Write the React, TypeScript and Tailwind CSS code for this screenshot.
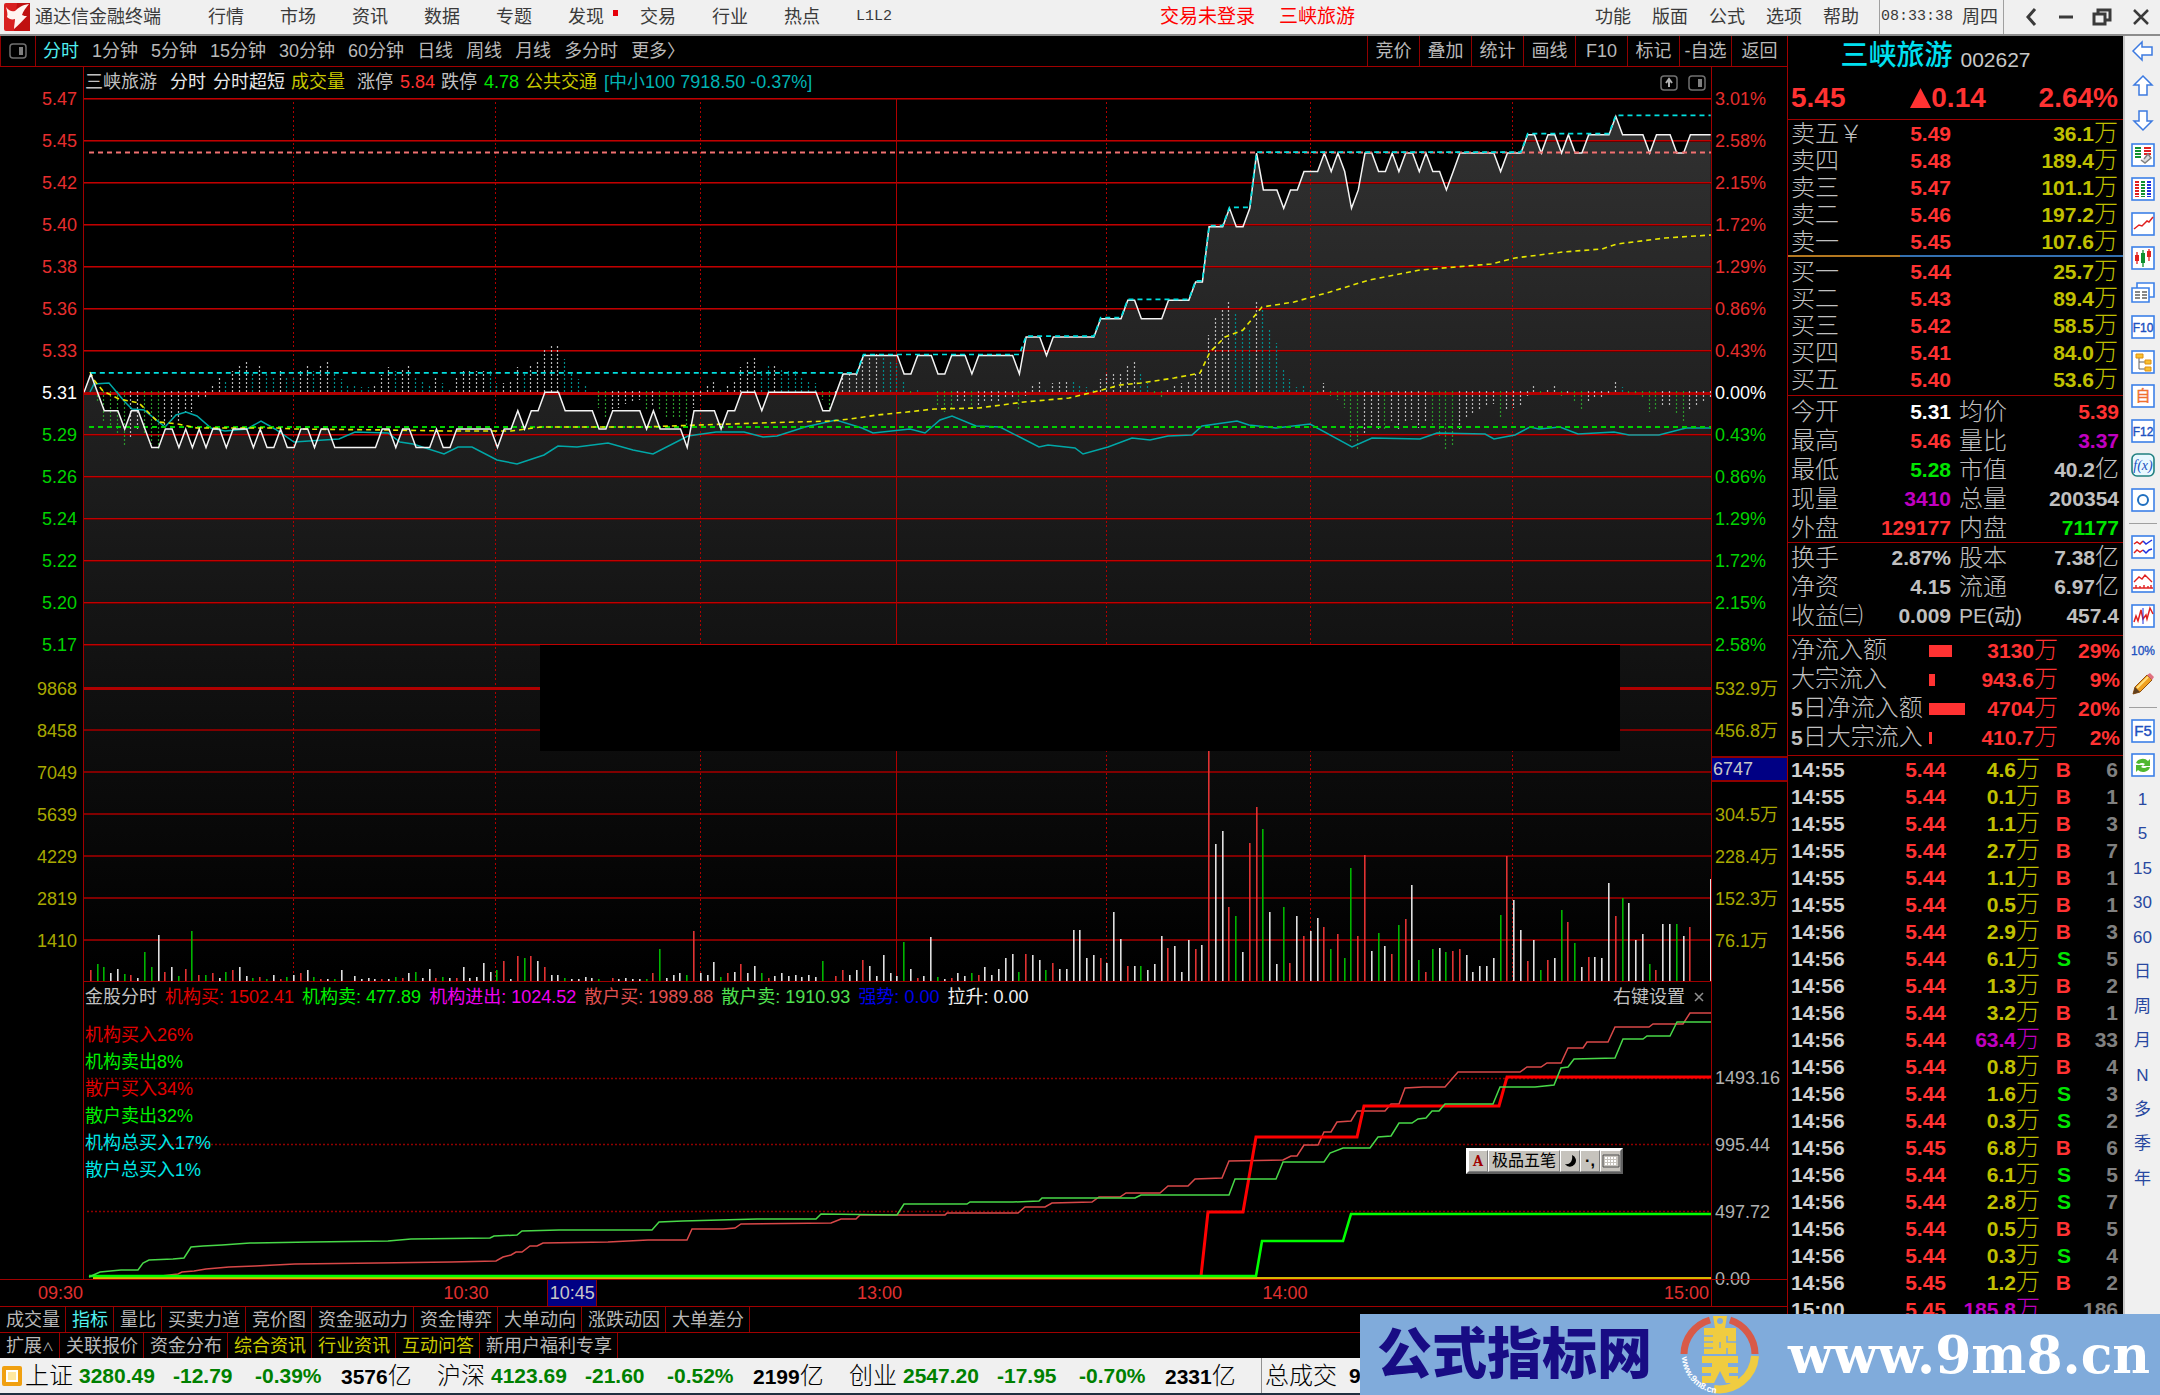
import type { ReactNode } from "react";

const MENU = ["行情", "市场", "资讯", "数据", "专题", "发现", "交易", "行业", "热点", "L1L2"];
const SYSTEM_MENU = ["功能", "版面", "公式", "选项", "帮助"];
const PERIODS = ["分时", "1分钟", "5分钟", "15分钟", "30分钟", "60分钟", "日线", "周线", "月线", "多分时", "更多〉"];
const ACTIONS = ["竞价", "叠加", "统计", "画线", "F10", "标记", "-自选", "返回"];

const PRICE_AXIS = ["5.47", "5.45", "5.42", "5.40", "5.38", "5.36", "5.33", "5.31", "5.29", "5.26", "5.24", "5.22", "5.20", "5.17"];
const PERCENT_AXIS = ["3.01%", "2.58%", "2.15%", "1.72%", "1.29%", "0.86%", "0.43%", "0.00%", "0.43%", "0.86%", "1.29%", "1.72%", "2.15%", "2.58%"];
const VOLUME_AXIS = ["9868", "8458", "7049", "5639", "4229", "2819", "1410"];
const AMOUNT_AXIS = ["532.9万", "456.8万", "6747", "304.5万", "228.4万", "152.3万", "76.1万"];

const TABS = ["成交量", "指标", "量比", "买卖力道", "竞价图", "资金驱动力", "资金博弈", "大单动向", "涨跌动因", "大单差分"];
const LINKS = ["扩展∧", "关联报价", "资金分布", "综合资讯", "行业资讯", "互动问答", "新用户福利专享"];

// [minute, price in cents], only the turning points
const PRICE =
  "0:531 1:532 3:530 5:530 6:529 7:530 8:530 10:528 11:528 12:529 13:529 14:528 15:529 16:528 17:529 18:528 19:529 20:529 21:528 22:529 24:529 25:528 26:529 27:528 28:528 29:529 30:528 31:528 32:529 33:529 34:528 35:529 36:529 37:528 43:528 44:529 45:529 46:528 47:529 48:529 49:528 51:528 52:529 53:528 54:528 55:529 60:529 61:528 62:529 63:529 64:530 65:529 66:530 67:530 68:531 70:531 71:530 75:530 76:529 77:529 78:530 82:530 83:529 84:530 85:529 88:529 89:528 90:530 93:530 94:529 95:530 96:530 97:531 99:531 100:530 101:531 108:531 109:530 110:530 111:531 112:532 114:532 115:533 120:533 121:532 122:532 123:533 125:533 126:532 127:532 128:533 130:533 131:532 132:533 137:533 138:532 139:534 141:534 142:533 143:534 149:534 150:535 153:535 154:536 155:536 156:535 159:535 160:536 163:536 164:537 165:537 166:540 168:540 169:541 170:540 171:540 172:541 173:544 174:542 176:542 177:541 178:542 179:542 180:543 182:543 183:544 184:543 185:544 186:543 187:541 188:542 189:544 190:544 191:543 192:543 193:544 194:543 195:544 196:544 197:543 198:544 199:543 200:543 201:542 202:543 203:544 208:544 209:543 210:544 212:544 213:545 214:545 215:544 216:545 217:545 218:544 219:545 220:544 221:544 222:545 225:545 226:546 227:545 230:545 231:544 232:545 234:545 235:544 236:544 237:545 240:545"
    .split(" ")
    .map((pair) => pair.split(":").map(Number) as [number, number]);

// one entry a minute from minute 2: signed height, then w / t / g
const MOMENTUM =
  "-10g -30g -35g -42g -55g -45w -38w -42g -52g -57g -35w -32w -30w -22w -20w -6w -6w 8w 16w 10t 21w 27w 30w 20t 27w 18t 14t 21w 15t 15t 21w 28w 21t 27w 30w 20t 13t 8t 6t 5t 5t 6w 17w 25w 21t 23w 27w 16t 10t 6t 15w 9t 4t 14w 21w 21w 21w 21w 21t 9t 9w 12w 25w 20t 27w 30w 42w 48w 48w 33t 19t 13t 7t 0w -16g -25g -18w -16w -12w -9w -8w -18g -13w -18g -25g -27g -27g -33g -16w -4w 6w 12w 2t 8w 12w 25w 32w 36w 21t 27t 27w 24t 21t 21t 15t 12t 9t -8g -18g -4w 18w 18w 20w 36w 36w 40w 34t 32t 29t 10t -3g 3t 0w 0w -13g -20g -16g -10w -10w -18g -14w -10w -9w -9w -7w -6w -18g -4w 8w 12w 3t 9w 12w 12w 10t 8t 5t 4t 13w 18w 18w 18w 28w 31w 18t 9t -2g -5g 4w 8w 9w 10w 18w 22w 57w 76w 82w 91w 79t 62t 62t 91w 83t 64t 49t 22t 13t 5t 7t 4t -2g 9w -4g -8g -16g -51g -59g -41w -34w -37w -39g -31w -38w -31w -28w -36w -31w -36g -44g -58g -53g -37w -27w -21w -17w -14w -12w -25g -19w -16w -14w -4w 7w -3g 4w 7w -4g -3w -11g -19g -10w -7w -5w -3w 12w 5t -1g -3g -6g -20g -18g -14w -14w -22g -29g -19w -14w -9w -6w".split(" ");

// one entry a minute from minute 1: height, then r / g / w
const VOLUME =
  "11r 17g 14g 8w 12w 7g 6r 3w 29g 14g 46w 9r 14w 5g 12r 50g 6r 6g 8r 3w 9g 11r 14w 5w 3g 4r 2g 6w 2r 4g 6w 8r 11w 4g 2r 2w 2g 11w 0w 5w 2w 3w 2w 2r 2w 4g 3r 8w 9g 3w 12w 3r 4g 3w 3r 14w 3w 4w 18w 9w 11g 20r 2w 25r 23g 25r 20w 14r 6w 6w 3g 2w 2w 4w 3w 2g 0w 3r 2w 3w 2w 2w 2g 8r 32g 3w 6w 8w 6g 50r 8w 6w 19w 4g 8r 9w 17r 8w 15w 8g 3r 5w 8w 5w 6w 4w 6w 4w 20g 0w 5r 11r 6w 11w 21r 15w 5w 26w 8w 5w 39g 12w 3r 5w 44w 4g 2w 3r 8w 5w 8g 6r 14w 6w 12w 23w 27w 9g 27r 26w 21w 11g 18r 12w 12w 51w 51w 23w 26w 23r 18w 69w 42w 15r 15w 15g 11w 17w 45w 33r 35w 9w 41w 32r 36w 265r 137w 150w 74r 65g 29w 138r 174r 152g 69w 17w 74g 18r 65w 45r 50w 63w 54r 32g 47r 23g 113g 45r 126r 30w 48g 35w 27r 56g 62r 96w 21g 9r 32g 33w 29g 30r 32r 26w 9w 15w 15w 23w 66g 125r 81w 51w 20r 41w 11g 21r 23w 71g 59r 38g 14w 24r 24w 23w 98w 65r 83g 78w 41w 47w 17g 11r 57w 57w 57g 45w 54r 0w 0w 102w".split(" ");

const AVERAGE =
  "90,372 94,380 103,391 119,399 139,403 149,413 158,422 178,424 197,428 277,428 294,429 388,430 444,431 511,431 541,427 644,427 699,425 760,423 832,421 850,419 877,415 907,412 934,409 979,408 1024,402 1069,398 1102,390 1120,385 1141,383 1174,378 1200,373 1210,352 1225,337 1243,330 1262,307 1294,302 1330,292 1369,280 1420,270 1491,264 1515,258 1563,252 1602,249 1617,244 1665,238 1711,235";
const INDEX_LINE =
  "90,392 94,384 109,383 125,402 132,409 144,410 165,427 176,415 186,412 197,416 211,428 225,431 247,429 261,421 275,429 294,442 339,439 355,432 388,433 400,442 413,444 444,454 458,447 472,447 497,460 517,464 544,455 558,446 577,447 608,443 633,450 653,454 688,436 716,432 744,432 763,437 777,436 805,427 836,420 862,428 873,433 910,429 925,433 940,420 952,416 976,426 1000,427 1039,447 1048,445 1075,448 1083,454 1108,447 1132,438 1150,440 1168,436 1192,435 1202,426 1237,421 1249,425 1276,428 1310,424 1352,447 1372,438 1420,439 1437,433 1485,434 1494,439 1515,435 1530,427 1539,429 1560,427 1578,434 1614,432 1629,435 1659,435 1686,428 1711,428";

const RETAIL_SELL =
  "89,1277 100,1272 121,1270 138,1270 143,1263 149,1260 173,1259 184,1258 191,1247 203,1246 222,1245 250,1243 311,1242 388,1241 411,1239 490,1238 494,1236 517,1235 522,1231 559,1230 652,1230 659,1222 683,1221 757,1219 816,1219 821,1214 897,1215 904,1204 967,1204 970,1202 1013,1202 1039,1201 1042,1198 1135,1198 1141,1195 1229,1195 1235,1179 1276,1179 1283,1162 1324,1162 1330,1153 1343,1148 1370,1148 1378,1137 1391,1136 1399,1123 1412,1123 1418,1119 1426,1118 1432,1111 1439,1111 1445,1104 1493,1104 1500,1087 1535,1087 1554,1085 1561,1068 1568,1067 1574,1059 1615,1058 1623,1039 1643,1039 1647,1036 1670,1036 1677,1022 1711,1022";
const RETAIL_BUY =
  "161,1276 178,1274 182,1272 194,1271 206,1269 229,1267 255,1266 295,1264 377,1263 451,1262 496,1261 503,1257 511,1255 516,1252 522,1252 530,1246 537,1246 543,1243 608,1242 648,1240 687,1240 692,1229 723,1229 735,1228 741,1224 831,1223 841,1219 856,1219 860,1215 945,1215 947,1213 1018,1213 1025,1207 1045,1207 1052,1203 1092,1202 1099,1197 1120,1197 1126,1193 1160,1193 1168,1186 1188,1186 1195,1179 1222,1178 1229,1161 1283,1160 1291,1156 1297,1156 1304,1145 1318,1145 1324,1132 1331,1132 1337,1122 1351,1121 1357,1111 1385,1111 1391,1104 1399,1104 1405,1088 1423,1087 1445,1087 1458,1072 1520,1072 1527,1067 1541,1067 1547,1063 1561,1063 1568,1048 1583,1048 1587,1042 1608,1042 1615,1027 1649,1027 1653,1024 1683,1024 1690,1013 1711,1013";
const FUND_BUY = "1201,1276 1208,1212 1243,1212 1256,1137 1357,1137 1364,1106 1499,1106 1507,1077 1711,1077";
const FUND_SELL = "89,1276 1256,1276 1262,1241 1343,1241 1351,1214 1711,1214";

const ASKS = [
  ["卖五￥", "5.49", "36.1"],
  ["卖四", "5.48", "189.4"],
  ["卖三", "5.47", "101.1"],
  ["卖二", "5.46", "197.2"],
  ["卖一", "5.45", "107.6"],
];
const BIDS = [
  ["买一", "5.44", "25.7"],
  ["买二", "5.43", "89.4"],
  ["买三", "5.42", "58.5"],
  ["买四", "5.41", "84.0"],
  ["买五", "5.40", "53.6"],
];

const RED = "text-[#ff3232]";
const GREEN = "text-[#00e600]";
const PURPLE = "text-[#c000c0]";
const GRAY = "text-[#c0c0c0]";

const QUOTES = [
  ["今开", "5.31", "text-white", "均价", "5.39", RED],
  ["最高", "5.46", RED, "量比", "3.37", PURPLE],
  ["最低", "5.28", GREEN, "市值", "40.2亿", GRAY],
  ["现量", "3410", PURPLE, "总量", "200354", GRAY],
  ["外盘", "129177", RED, "内盘", "71177", GREEN],
];
const FUNDAMENTALS = [
  ["换手", "2.87%", GRAY, "股本", "7.38亿", GRAY],
  ["净资", "4.15", GRAY, "流通", "6.97亿", GRAY],
  ["收益㈢", "0.009", GRAY, "PE(动)", "457.4", GRAY],
];
const FLOWS: [string, number, string, string][] = [
  ["净流入额", 23, "3130万", "29%"],
  ["大宗流入", 6, "943.6万", "9%"],
  ["5日净流入额", 36, "4704万", "20%"],
  ["5日大宗流入", 3, "410.7万", "2%"],
];
const TRADES = [
  ["14:55", "5.44", "4.6万", "B", "6"],
  ["14:55", "5.44", "0.1万", "B", "1"],
  ["14:55", "5.44", "1.1万", "B", "3"],
  ["14:55", "5.44", "2.7万", "B", "7"],
  ["14:55", "5.44", "1.1万", "B", "1"],
  ["14:55", "5.44", "0.5万", "B", "1"],
  ["14:56", "5.44", "2.9万", "B", "3"],
  ["14:56", "5.44", "6.1万", "S", "5"],
  ["14:56", "5.44", "1.3万", "B", "2"],
  ["14:56", "5.44", "3.2万", "B", "1"],
  ["14:56", "5.44", "63.4万", "B", "33"],
  ["14:56", "5.44", "0.8万", "B", "4"],
  ["14:56", "5.44", "1.6万", "S", "3"],
  ["14:56", "5.44", "0.3万", "S", "2"],
  ["14:56", "5.45", "6.8万", "B", "6"],
  ["14:56", "5.44", "6.1万", "S", "5"],
  ["14:56", "5.44", "2.8万", "S", "7"],
  ["14:56", "5.44", "0.5万", "B", "5"],
  ["14:56", "5.44", "0.3万", "S", "4"],
  ["14:56", "5.45", "1.2万", "B", "2"],
  ["15:00", "5.45", "185.8万", "", "186"],
];

const INDEXES = [
  ["上证", "3280.49", "-12.79", "-0.39%", "3576"],
  ["沪深", "4123.69", "-21.60", "-0.52%", "2199"],
  ["创业", "2547.20", "-17.95", "-0.70%", "2331"],
];

const minuteX = (minute: number) => 84 + minute * 6.778;
const priceY = (cents: number) => 392.3 - (cents - 531) * 18.4;
const toPoints = (list: [number, number][]) =>
  list.map(([m, p]) => `${minuteX(m).toFixed(1)},${priceY(p).toFixed(1)}`).join(" ");

const BAR_COLORS: Record<string, string> = { r: "#e03232", g: "#00b400", w: "#e0e0e0" };
const MOMENTUM_COLORS: Record<string, string> = { w: "#b8b8b8", t: "#008a8a", g: "#2c962c" };

function PriceChart() {
  let top = 0;
  const highs = PRICE.slice(1).map(([m, p]) => {
    top = Math.max(top, p);
    return [m, top] as [number, number];
  });
  const line = toPoints(PRICE);

  return (
    <svg viewBox="84 98 1627 884" preserveAspectRatio="none" className="block w-full h-[884px]" role="img" aria-label="分时走势">
      <defs>
        <linearGradient id="area" gradientUnits="userSpaceOnUse" x1="0" y1="116" x2="0" y2="970">
          <stop offset="0" stopColor="#313131" />
          <stop offset="1" stopColor="#000000" />
        </linearGradient>
      </defs>
      <polygon points={`${line} 1711,982 84,982`} fill="url(#area)" />
      <g shapeRendering="crispEdges">
        {PRICE_AXIS.map((_, i) =>
          i === 7 ? null : (
            <g key={i}>
              <rect x="84" y={98 + i * 42} width="1627" height="1" fill="#c00000" />
              <rect x="84" y={99 + i * 42} width="1627" height="1" fill="#6a0000" />
            </g>
          ),
        )}
        <rect x="84" y="392" width="1627" height="3" fill="#b40000" />
        <rect x="84" y="687" width="1627" height="3" fill="#b00000" />
        {[730, 772, 814, 856, 898, 940].map((y) => (
          <rect key={y} x="84" y={y - 1} width="1627" height="2" fill="#800000" />
        ))}
        <rect x="84" y="981" width="1627" height="1" fill="#a00000" />
        {[293, 495, 700, 1106, 1310, 1512].map((x) => (
          <line key={x} x1={x + 0.5} x2={x + 0.5} y1="102" y2="981" stroke="#b00000" strokeWidth="1" strokeDasharray="2 2.5" />
        ))}
        <rect x="896" y="98" width="1" height="884" fill="#b00000" />
      </g>
      {MOMENTUM.map((entry, i) => {
        const h = parseInt(entry, 10);
        if (!h) return null;
        const x = Math.round(minuteX(i + 2)) - 1;
        return (
          <line
            key={i}
            x1={x + 0.5}
            x2={x + 0.5}
            y1={h > 0 ? 392 : 391}
            y2={392 - h}
            stroke={MOMENTUM_COLORS[entry.slice(-1)]}
            strokeWidth="1.2"
            strokeDasharray="2 2"
          />
        );
      })}
      {VOLUME.map((entry, i) => {
        const h = parseInt(entry, 10);
        return (
          <rect
            key={i}
            x={Math.round(minuteX(i + 1)) - 1}
            y={981 - h}
            width="1.6"
            height={h}
            fill={BAR_COLORS[entry.slice(-1)]}
          />
        );
      })}
      <g fill="none">
        <polyline points={INDEX_LINE} stroke="#00a8a8" strokeWidth="1.5" />
        <path d="M89 427H1711" stroke="#00d000" strokeWidth="2" strokeDasharray="5 4" />
        <polyline points={AVERAGE} stroke="#e6e600" strokeWidth="1.6" strokeDasharray="5 4" />
        <polyline points={line} stroke="#f4f4f4" strokeWidth="1.5" />
        <path d="M89 152.500H1711" stroke="#f07070" strokeWidth="2" strokeDasharray="5 4" />
        <polyline points={toPoints(highs)} stroke="#00e0e0" strokeWidth="1.7" strokeDasharray="5 4" transform="translate(0 -1)" />
      </g>
      <rect x="540" y="645" width="1080" height="106" fill="#000" />
    </svg>
  );
}

function FundChart() {
  return (
    <svg viewBox="84 1010 1627 269" preserveAspectRatio="none" className="block w-full h-[269px]" role="img" aria-label="金股分时">
      {[1078, 1144, 1211].map((y) => (
        <path key={y} d={`M87 ${y}.5H1711`} stroke="#900000" strokeWidth="1.5" strokeDasharray="2 2" />
      ))}
      <path d="M93 1278H1711" stroke="#d8b800" strokeWidth="2" />
      <g fill="none">
        <polyline points={RETAIL_BUY} stroke="#d84848" strokeWidth="1.5" />
        <polyline points={FUND_BUY} stroke="#ff0000" strokeWidth="3" />
        <polyline points={FUND_SELL} stroke="#00ff00" strokeWidth="2.600" />
        <polyline points={RETAIL_SELL} stroke="#48d848" strokeWidth="1.5" />
      </g>
    </svg>
  );
}

function TitleBar() {
  return (
    <header className="flex h-9 items-center border-b-2 border-[#8c8c8c] bg-[#f0f0f0] text-[18px] text-[#3a3a3a]">
      <svg viewBox="0 0 26 28" className="ml-1 h-7 w-[26px]">
        <rect width="26" height="28" rx="2" fill="#d82020" />
        <path d="M13 0H26V28H10Z" fill="#c01010" />
        <path d="M2 4C5 8 8 9 11 8 14 5 18 2 25 1 22 5 19 8 18 12c2 1 3 1 5 1-4 4-8 9-13 13 0-4 1-7 1-10-3 1-6 0-8-2C4 11 3 8 2 4Z" fill="#fff4f0" />
      </svg>
      <h1 className="ml-[5px] mr-[47px] whitespace-nowrap">通达信金融终端</h1>
      <nav className="flex gap-9 whitespace-nowrap">
        {MENU.map((item) => (
          <button key={item} className={`relative ${item === "L1L2" ? "font-['Liberation_Mono'] text-[15px]" : ""}`}>
            {item}
            {item === "发现" && <span className="absolute -right-[14px] top-[6px] h-[6px] w-[5px] bg-red-600" />}
          </button>
        ))}
      </nav>
      <div className="ml-auto flex gap-6 whitespace-nowrap text-[19px] text-[#ff0000]">
        <button>交易未登录</button>
        <button>三峡旅游</button>
      </div>
      <nav className="ml-[240px] flex gap-[21px] whitespace-nowrap">
        {SYSTEM_MENU.map((item) => (
          <button key={item}>{item}</button>
        ))}
      </nav>
      <div className="ml-[20px] flex h-full w-[125px] items-center gap-[9px] whitespace-nowrap border-x border-[#a0a0a0] px-px">
        <time className="font-['Liberation_Mono'] text-[15px]">08:33:38</time>
        <span>周四</span>
      </div>
      <div className="flex w-[156px] items-center justify-between pl-[19px] pr-[9px]">
        <button aria-label="后退">
          <svg viewBox="0 0 16 20" className="h-5 w-4" fill="none" stroke="#3a3a3a" strokeWidth="3"><path d="M12 2 5 10l7 8" /></svg>
        </button>
        <button aria-label="最小化">
          <svg viewBox="0 0 16 20" className="h-5 w-4" stroke="#3a3a3a" strokeWidth="3"><path d="M1 10h14" /></svg>
        </button>
        <button aria-label="还原">
          <svg viewBox="0 0 20 20" className="h-5 w-5" fill="none" stroke="#3a3a3a" strokeWidth="3"><path d="M2 7h11v10H2zM6 7V3h12v10h-5" /></svg>
        </button>
        <button aria-label="关闭">
          <svg viewBox="0 0 20 20" className="h-5 w-5" fill="none" stroke="#3a3a3a" strokeWidth="2.500"><path d="m3 3 14 14M17 3 3 17" /></svg>
        </button>
      </div>
    </header>
  );
}

function PanelIcon({ up = false }: { up?: boolean }) {
  return (
    <svg viewBox="0 0 18 16" className="h-4 w-[18px]" fill="none" stroke="#707070" strokeWidth="1.5">
      <rect x="1" y="1" width="16" height="14" rx="3" />
      {up ? <path d="M9 12V5M6 8l3-4 3 4" stroke="#b0b0b0" strokeWidth="2" /> : <path d="M12 4v8" stroke="#808080" strokeWidth="4" />}
    </svg>
  );
}

function PeriodBar() {
  return (
    <div className="flex h-[31px] items-stretch whitespace-nowrap border-b border-[#a00000] text-[18px] text-[#b8b8b8]">
      <button aria-label="侧栏" className="flex w-9 items-center justify-center border-x border-[#900000]">
        <PanelIcon />
      </button>
      <div className="flex items-center gap-[13px] pl-[7px]">
        {PERIODS.map((p, i) => (
          <button key={p} className={i === 0 ? "text-[#50f0f0]" : ""}>
            {p}
          </button>
        ))}
      </div>
      <div className="ml-auto flex">
        {ACTIONS.map((a) => (
          <button key={a} className="w-[52px] border-l border-[#900000] last:w-[56px]">
            {a}
          </button>
        ))}
      </div>
    </div>
  );
}

function axisColor(index: number) {
  if (index === 7) return "text-white";
  return index < 7 ? "text-[#e62e2e]" : "text-[#00d200]";
}

function LeftAxis() {
  return (
    <div className="w-[83px] pt-[11px] pr-[6px] text-right text-[18px] leading-[42px]">
      {PRICE_AXIS.map((v, i) => (
        <div key={v} className={axisColor(i)}>{v}</div>
      ))}
      <div className="mt-0.5 text-[#a8a800]">
        {VOLUME_AXIS.map((v) => (
          <div key={v}>{v}</div>
        ))}
      </div>
    </div>
  );
}

function RightAxis() {
  return (
    <div className="w-[75px] whitespace-nowrap pt-[11px] text-[18px] leading-[42px]">
      {PERCENT_AXIS.map((v, i) => (
        <div key={i} className={`pl-[3px] ${axisColor(i)}`}>{v}</div>
      ))}
      <div className="mt-0.5 text-[#a8a800]">
        {AMOUNT_AXIS.map((v, i) =>
          i === 2 ? (
            <div key={v} className="h-[42px] pt-1">
              <div className="h-[26px] border-y-2 border-[#900000] bg-[#000084] pl-px leading-[22px] text-[#c8c8c8]">{v}</div>
            </div>
          ) : (
            <div key={v} className="h-[42px] pl-[3px]">{v}</div>
          ),
        )}
      </div>
      <div className="mt-[83px] pl-[3px] leading-[67px] text-[#b0b0b0]">
        <div>1493.16</div>
        <div>995.44</div>
        <div>497.72</div>
        <div className="-mb-9">0.00</div>
      </div>
    </div>
  );
}

function InputMethodBar() {
  const key = "flex h-full items-center justify-center border border-t-white border-l-white border-r-[#808080] border-b-[#808080]";
  return (
    <div className="absolute right-[88px] top-[138px] flex h-[26px] items-center border-2 border-t-white border-l-white border-r-[#606060] border-b-[#606060] bg-[#c6c3bd] text-[16px] leading-none text-black">
      <button className={`${key} w-5 font-serif font-bold text-[#a00000]`}>A</button>
      <button className={`${key} w-[72px] whitespace-nowrap`}>极品五笔</button>
      <button className={`${key} w-5`} aria-label="半角">
        <svg viewBox="0 0 16 16" className="h-4 w-4"><path d="M10 2a6 6 0 1 1-7 9c5 1 8-3 7-9Z" /></svg>
      </button>
      <button className={`${key} w-5 font-bold`}>·,</button>
      <button className={`${key} w-[21px]`} aria-label="软键盘">
        <svg viewBox="0 0 18 14" className="h-[14px] w-[18px]" fill="none" stroke="#505050">
          <path d="M1 1h16v12H1z" />
          <path d="M3 4h12M3 7h12M3 10h12" stroke="#fff" strokeWidth="2" strokeDasharray="2 1" />
        </svg>
      </button>
    </div>
  );
}

function ChartColumn() {
  return (
    <div className="min-w-0 flex-1 border-x border-[#a00000]">
      <div className="flex h-[31px] items-center whitespace-nowrap pl-px text-[18px]">
        <span className="mr-[13px] text-[#c0c0c0]">三峡旅游</span>
        <span className="mr-[7px] text-[#e8e8e8]">分时</span>
        <span className="mr-[6px] text-[#e8e8e8]">分时超短</span>
        <span className="mr-3 text-[#c8c800]">成交量</span>
        <span className="mr-[7px] text-[#c0c0c0]">涨停</span>
        <span className="mr-[6px] text-[#ff3232]">5.84</span>
        <span className="mr-[7px] text-[#c0c0c0]">跌停</span>
        <span className="mr-[6px] text-[#00e600]">4.78</span>
        <span className="mr-[7px] text-[#c8c800]">公共交通</span>
        <span className="text-[#00b4b4]">[中小100 7918.50 -0.37%]</span>
        <div className="ml-auto mr-[5px] flex gap-[10px]">
          <button aria-label="上移"><PanelIcon up /></button>
          <button aria-label="展开"><PanelIcon /></button>
        </div>
      </div>
      <PriceChart />
      <div className="flex h-[28px] items-center gap-2 whitespace-nowrap pl-px pt-0.5 text-[18px]">
        <span className="text-[#c0c0c0]">金股分时</span>
        <span className="text-[#e00000]">机构买: 1502.41</span>
        <span className="text-[#00f000]">机构卖: 477.89</span>
        <span className="text-[#f000f0]">机构进出: 1024.52</span>
        <span className="text-[#e05050]">散户买: 1989.88</span>
        <span className="text-[#50e050]">散户卖: 1910.93</span>
        <span className="text-[#0000e8]">强势: 0.00</span>
        <span className="text-[#f0f0f0]">拉升: 0.00</span>
        <button className="ml-auto text-[#c0c0c0]">右键设置</button>
        <button aria-label="关闭指标" className="mr-[6px]">
          <svg viewBox="0 0 12 12" className="h-3 w-3" stroke="#909090" strokeWidth="1.5"><path d="m2 2 8 8M10 2 2 10" /></svg>
        </button>
      </div>
      <div className="relative">
        <FundChart />
        <ul className="absolute left-px top-3 text-[18px] leading-[27px] text-[#00e6e6]">
          <li className="text-[#e00000]">机构买入26%</li>
          <li className="text-[#00f000]">机构卖出8%</li>
          <li className="text-[#e00000]">散户买入34%</li>
          <li className="text-[#00f000]">散户卖出32%</li>
          <li>机构总买入17%</li>
          <li>散户总买入1%</li>
        </ul>
        <InputMethodBar />
      </div>
    </div>
  );
}

function TimeAxis() {
  return (
    <div className="flex h-[27px] border-t border-[#a00000] pr-[75px] text-right text-[18px] leading-[26px] text-[#e03030]">
      <span className="w-[83px]">09:30</span>
      <span className="grow-[406] basis-0">10:30</span>
      <span className="flex grow-[109] basis-0 justify-end">
        <span className="w-[50px] border-x border-[#900000] bg-[#000084] text-center text-[#c8c8c8]">10:45</span>
      </span>
      <span className="grow-[305] basis-0">13:00</span>
      <span className="grow-[406] basis-0">14:00</span>
      <span className="grow-[402] basis-0 border-r border-[#a00000] pr-0.5">15:00</span>
    </div>
  );
}

function TabRow({ items, active, yellow = [] }: { items: string[]; active?: string; yellow?: string[] }) {
  return (
    <div className="flex h-[26px] whitespace-nowrap border-t border-[#a00000] text-[18px] leading-[26px] text-[#b8b8b8]">
      {items.map((t) => (
        <button
          key={t}
          className={`border-r border-[#900000] pl-[6px] pr-[5px] ${t === active ? "text-[#50f0f0]" : ""} ${yellow.includes(t) ? "text-[#c8c800]" : ""}`}
        >
          {t.replace("∧", "")}
          {t.endsWith("∧") && <span className="text-[12px]">∧</span>}
        </button>
      ))}
    </div>
  );
}

function OrderRows({ rows }: { rows: string[][] }) {
  return (
    <table className="w-full table-fixed border-collapse leading-[27px]">
      <tbody>
        {rows.map(([label, price, volume]) => (
          <tr key={label} className="h-[27px]">
            <th className="w-[75px] whitespace-nowrap p-0 pl-[3px] text-left text-[24px] font-light text-[#c0c0c0]">{label}</th>
            <td className="w-[88px] p-0 text-right text-[21px] font-bold text-[#ff3232]">{price}</td>
            <td className="p-0 pr-[5px] text-right text-[21px] font-bold text-[#c0c000]">
              {volume}
              <span className="text-[24px] font-light leading-none">万</span>
            </td>
          </tr>
        ))}
      </tbody>
    </table>
  );
}

function Amount({ value }: { value: string }) {
  const unit = value.match(/[万亿]$/)?.[0];
  if (!unit) return <>{value}</>;
  return (
    <>
      {value.slice(0, -1)}
      <span className="text-[24px] font-light leading-none">{unit}</span>
    </>
  );
}

function QuoteRows({ rows }: { rows: string[][] }) {
  return (
    <table className="w-full table-fixed border-collapse leading-[29px]">
      <tbody>
        {rows.map(([a, aValue, aColor, b, bValue, bColor]) => (
          <tr key={a} className="h-[29px]">
            <th className="w-[75px] whitespace-nowrap p-0 pl-[3px] text-left text-[24px] font-light text-[#c0c0c0]">{a}</th>
            <td className={`w-[88px] p-0 text-right text-[21px] font-bold ${aColor}`}>{aValue}</td>
            <th className={`w-[74px] whitespace-nowrap p-0 pl-2 text-left text-[#c0c0c0] ${b === "PE(动)" ? "text-[21px] font-normal" : "text-[24px] font-light"}`}>{b}</th>
            <td className={`p-0 pr-[4px] text-right text-[21px] font-bold ${bColor}`}><Amount value={bValue} /></td>
          </tr>
        ))}
      </tbody>
    </table>
  );
}

function QuotePanel() {
  return (
    <aside className="flex w-[336px] shrink-0 flex-col border-l border-[#a00000] leading-none">
      <div className="h-[84px] border-b border-[#a00000]">
        <div className="flex h-10 items-center justify-center gap-2 pr-[40px]">
          <h2 className="text-[28px] font-medium text-[#00e0f0]">三峡旅游</h2>
          <span className="pt-[6px] text-[21px] text-[#c8c8c8]">002627</span>
        </div>
        <div className="flex h-[44px] items-center justify-between pl-[3px] pr-[5px] text-[28px] font-bold text-[#ff3232]">
          <span>5.45</span>
          <span className="flex items-center pl-3">
            <svg viewBox="0 0 21 20" className="h-5 w-[21px]" fill="#ff3232"><path d="M10.500 0 21 20H0Z" /></svg>
            0.14
          </span>
          <span>2.64%</span>
        </div>
      </div>
      <OrderRows rows={ASKS} />
      <div className="mb-px flex h-0.5">
        <span className="w-1/3 bg-[#b47820]" />
        <span className="flex-1 bg-[#3470b0]" />
      </div>
      <OrderRows rows={BIDS} />
      <div className="mt-0.5 border-t border-[#a00000] pt-px">
        <QuoteRows rows={QUOTES} />
      </div>
      <div className="border-t border-[#a00000] pb-[5px]">
        <QuoteRows rows={FUNDAMENTALS} />
      </div>
      <div className="border-y border-[#a00000] pb-[3px]">
        <table className="w-full table-fixed border-collapse leading-[29px]">
          <tbody>
            {FLOWS.map(([label, width, amount, percent]) => (
              <tr key={label} className="h-[29px] text-right text-[21px] font-bold text-[#ff3232]">
                <th className="w-[141px] whitespace-nowrap p-0 pl-[3px] text-left text-[#c0c0c0]">
                  {label.startsWith("5") && "5"}
                  <span className="text-[24px] font-light leading-none">{label.replace("5", "")}</span>
                </th>
                <td className="w-[40px] p-0 align-middle">
                  <div className="h-3 bg-[#ff3232]" style={{ width }} />
                </td>
                <td className="w-[89px] p-0"><Amount value={amount} /></td>
                <td className="p-0 pr-[3px]">{percent}</td>
              </tr>
            ))}
          </tbody>
        </table>
      </div>
      <table className="w-full table-fixed border-collapse leading-[27px]">
        <tbody>
          {TRADES.map(([time, price, volume, side, count], i) => (
            <tr key={i} className="h-[27px] text-right text-[21px] font-bold">
              <td className="w-[70px] p-0 pl-[3px] text-left text-[#d0d0d0]">{time}</td>
              <td className="w-[88px] p-0 text-[#ff3232]">{price}</td>
              <td className={`w-[94px] p-0 ${volume.length > 4 ? "text-[#c000c0]" : "text-[#c0c000]"}`}><Amount value={volume} /></td>
              <td className={`w-[31px] p-0 ${side === "S" ? "text-[#00e600]" : "text-[#ff3232]"}`}>{side}</td>
              <td className="p-0 pr-[5px] text-[#808080]">{count}</td>
            </tr>
          ))}
        </tbody>
      </table>
    </aside>
  );
}

function Arrow({ turn }: { turn: string }) {
  return <path d="M2 12 11 3v5h10v8H11v5Z" transform={turn} fill="#fff" stroke="#3c7ae0" strokeWidth="1.5" />;
}

function Frame({ children }: { children?: ReactNode }) {
  return (
    <>
      <rect x="1" y="1" width="22" height="22" fill="#fff" stroke="#3c80e8" strokeWidth="1.6" />
      {children}
    </>
  );
}

function FrameText({ text, color = "#2050c0" }: { text: string; color?: string }) {
  return (
    <Frame>
      <text x="12" y="17" textAnchor="middle" fontSize={text.length > 2 ? 12 : 15} fill={color} stroke={color} strokeWidth="0.4" fontFamily="Liberation Sans, Noto Sans CJK SC, sans-serif">
        {text}
      </text>
    </Frame>
  );
}

const TOOLS: [string, ReactNode][] = [
  ["后退", <Arrow turn="" />],
  ["上翻", <Arrow turn="rotate(90 12 12)" />],
  ["下翻", <Arrow turn="rotate(-90 12 12)" />],
  ["报价设置", <Frame><path d="M4 5h6M4 8h6M4 11h6M4 14h6" stroke="#109030" strokeWidth="2" /><path d="M13 5h7M13 8h7M13 11h7" stroke="#e02020" strokeWidth="2" /><path d="m10 17 4 3 6-5-3-4-4 5" fill="#ddd" stroke="#808080" strokeWidth="1.5" /></Frame>],
  ["报价列表", <Frame><path d="M6 4v16" stroke="#e02020" strokeWidth="4" strokeDasharray="2 1" /><path d="M12 4v16" stroke="#109030" strokeWidth="4" strokeDasharray="2 1" /><path d="M18 4v16" stroke="#2030e0" strokeWidth="4" strokeDasharray="2 1" /></Frame>],
  ["分时图", <Frame><path d="m3 17 5-4 3 1 5-5 2 1 4-5" fill="none" stroke="#e02020" strokeWidth="1.5" /></Frame>],
  ["K线图", <Frame><path d="M6 6v12M18 3v12" stroke="#e02020" strokeWidth="1.3" /><path d="M6 9v6M18 5v6" stroke="#e02020" strokeWidth="4" /><path d="M12 4v17" stroke="#109030" strokeWidth="1.3" /><path d="M12 7v10" stroke="#109030" strokeWidth="4" /></Frame>],
  ["资讯", <g fill="#fff" stroke="#3c80e8" strokeWidth="1.6"><path d="M6 2h17v14H6z" /><path d="M1 7h17v14H1z" /><path d="M4 11h5M11 11h5M4 14h5M11 14h5M4 17h5M11 17h5" stroke="#606060" /></g>],
  ["F10", <FrameText text="F10" />],
  ["板块树", <Frame><path d="M8 7v12h6M8 12h6" fill="none" stroke="#606060" /><path d="M5 4h7v4H5zM14 10h6v4h-6zM14 17h6v4h-6z" fill="#f8c030" stroke="#e09010" /></Frame>],
  ["自选", <FrameText text="自" color="#f07030" />],
  ["F12", <FrameText text="F12" />],
  ["公式", <g><rect x="1" y="1" width="22" height="22" rx="5" fill="#e8f8ff" stroke="#208080" strokeWidth="1.6" /><text x="12" y="17" textAnchor="middle" fontSize="14" fontStyle="italic" fill="#2050c0" fontFamily="Liberation Serif, serif">f(x)</text></g>],
  ["循环", <Frame><circle cx="12" cy="12" r="5" fill="none" stroke="#2070c0" strokeWidth="2" /></Frame>],
];

const CHART_TOOLS: [string, ReactNode][] = [
  ["多股同列", <Frame><path d="m3 9 3-2 3 2 3-3M3 18l3-3 3 2 3-2" fill="none" stroke="#e02020" strokeWidth="1.500" /><path d="m12 6 3 3 3-2 3-2M12 15l3 3 3-3 3-1" fill="none" stroke="#2030e0" strokeWidth="1.500" /></Frame>],
  ["走势对比", <Frame><path d="m3 13 5-5 3 2 3-4 7 7M2 19h20M5 19v-3M9 19v-2M13 19v-3M17 19v-2M20 19v-3" fill="none" stroke="#e02020" strokeWidth="1.400" /></Frame>],
  ["叠加走势", <Frame><path d="m3 18 2-6 2 5 3-11 2 9 3-4 1 4 3-11 3 6" fill="none" stroke="#e02020" strokeWidth="1.500" /><path d="M12 4v16" stroke="#2030e0" /></Frame>],
  ["10%", <text x="12" y="17" textAnchor="middle" fontSize="12" fill="#2050c0" stroke="#2050c0" strokeWidth="0.3" fontFamily="Liberation Sans, sans-serif">10%</text>],
  ["画线", <g><path d="m2 22 2-7L16 3l5 5L9 20Z" fill="#f0a020" stroke="#905010" /><path d="m4 15 5 5-7 2Z" fill="#604020" /><path d="m16 3 3-2 4 4-2 3Z" fill="#e07080" /><path d="m6 16 11-11" stroke="#ffe080" strokeWidth="2" /></g>],
];

const SYSTEM_TOOLS: [string, ReactNode][] = [
  ["F5", <FrameText text="F5" />],
  ["刷新", <Frame><path d="M5 10a7 6 0 0 1 12-2l2-2v7h-7l2-2a4 3 0 0 0-6 0ZM19 14a7 6 0 0 1-12 3l-2 2v-7h7l-2 2a4 3 0 0 0 6 0Z" fill="#50b830" /></Frame>],
];
const SPANS = ["1", "5", "15", "30", "60", "日", "周", "月", "N", "多", "季", "年"];

function ToolButtons({ tools }: { tools: [string, ReactNode][] }) {
  return (
    <>
      {tools.map(([label, icon]) => (
        <button key={label} aria-label={label} className="flex h-[30px] items-center">
          <svg viewBox="0 0 24 24" className="h-6 w-6">{icon}</svg>
        </button>
      ))}
    </>
  );
}

function ToolBar() {
  return (
    <nav className="flex w-[37px] shrink-0 flex-col items-center border-l-2 border-[#c8c8c8] bg-[#f0f0f0] text-[18px] text-[#2848a0]">
      <div className="flex h-[479px] flex-col items-center justify-between">
        <ToolButtons tools={TOOLS} />
      </div>
      <hr className="my-2 w-7 border-[#a0a0a0]" />
      <div className="flex h-[167px] flex-col items-center justify-between">
        <ToolButtons tools={CHART_TOOLS} />
      </div>
      <hr className="my-2 w-7 border-[#a0a0a0]" />
      <div className="flex h-[478px] flex-col items-center justify-between">
        <ToolButtons tools={SYSTEM_TOOLS} />
        {SPANS.map((s) => (
          <button key={s} className="h-[30px] text-[17px] leading-[30px]">{s}</button>
        ))}
      </div>
    </nav>
  );
}

function StatusBar() {
  return (
    <footer className="flex h-[37px] items-center whitespace-nowrap border-b-2 border-[#203040] bg-[#f0f0f0] text-[21px] leading-none text-black">
      <svg viewBox="0 0 22 22" className="ml-px mr-0.5 h-[22px] w-[22px]">
        <rect x="1" y="1" width="20" height="20" rx="2" fill="#f0a010" />
        <rect x="6" y="6" width="10" height="10" fill="#ffe8a0" stroke="#fff" strokeWidth="2" />
      </svg>
      {INDEXES.map(([name, value, change, percent, amount]) => (
        <div key={name} className="flex w-[412px] items-center font-bold text-[#008000]">
          <span className="w-[54px] text-[24px] font-light text-black">{name}</span>
          <span className="w-[94px]">{value}</span>
          <span className="w-[82px]">{change}</span>
          <span className="w-[86px]">{percent}</span>
          <span className="text-black">
            {amount}
            <span className="text-[24px] font-light">亿</span>
          </span>
        </div>
      ))}
      <div className="flex h-full items-center gap-3 border-l border-[#909090] pl-[3px]">
        <span className="text-[24px] font-light">总成交</span>
        <span className="font-bold">9375亿</span>
      </div>
    </footer>
  );
}

function SiteBanner() {
  return (
    <a href="#site" className="absolute bottom-0 right-0 flex h-[81px] w-[800px] items-center whitespace-nowrap bg-[#80abdb] pl-[17px] leading-none">
      <span className="text-[55px] font-black text-[#180c84]">公式指标网</span>
      <svg viewBox="0 0 80 80" className="ml-[28px] h-20 w-20">
        <path d="M4 39A36 36 0 0 1 30 5" fill="none" stroke="#d85a48" strokeWidth="7" />
        <path d="M50 5A36 36 0 0 1 75 39" fill="none" stroke="#d85a48" strokeWidth="7" />
        <path d="M75 41A36 36 0 0 1 34 74" fill="none" stroke="#f0cc40" strokeWidth="8" />
        <path d="M33 1h14l-2 12h11v26H24V13h11Z" fill="#f0cc40" />
        <path d="M22 41h36v7H48v4h10v6H49v3h9v7H46l-6-12-6 12H22v-7h9v-3h-9v-6h10v-4H22Z" fill="#f0cc40" />
        <circle cx="40" cy="6" r="3" fill="#80abdb" />
        <path d="M24 21h9M33 27h-9M47 21v6h9M40 27v6M33 33h-9M47 33v6" stroke="#80abdb" strokeWidth="1.500" fill="none" />
        <path id="ring" d="M2 42A38 38 0 0 0 34 78" fill="none" />
        <text fontSize="9" fontWeight="bold" fill="#fff" fontFamily="Liberation Sans, sans-serif">
          <textPath href="#ring">www.9m8.cn</textPath>
        </text>
      </svg>
      <span className="ml-[28px] font-['DejaVu_Serif',serif] text-[52px] font-bold text-white">www.9m8.cn</span>
    </a>
  );
}

export default function App() {
  return (
    <div className="relative flex min-h-screen flex-col overflow-hidden bg-black font-['Liberation_Sans','Noto_Sans_CJK_SC',sans-serif]">
      <TitleBar />
      <div className="flex flex-1">
        <main className="flex min-w-0 flex-1 flex-col">
          <PeriodBar />
          <div className="flex">
            <LeftAxis />
            <ChartColumn />
            <RightAxis />
          </div>
          <TimeAxis />
          <TabRow items={TABS} active="指标" />
          <TabRow items={LINKS} yellow={["综合资讯", "行业资讯", "互动问答"]} />
        </main>
        <QuotePanel />
        <ToolBar />
      </div>
      <StatusBar />
      <SiteBanner />
    </div>
  );
}
